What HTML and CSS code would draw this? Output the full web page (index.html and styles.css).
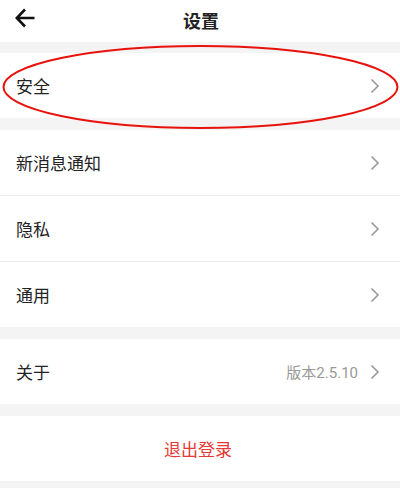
FILE: index.html
```html
<!DOCTYPE html>
<html lang="zh-CN">
<head>
<meta charset="utf-8">
<title>设置</title>
<link rel="stylesheet" href="styles.css">
</head>
<body>
<div class="page">
  <header class="topbar">
    <svg class="back" width="20" height="20" viewBox="0 0 20 20"><path d="M19.5 10H1.8M10 1.5L1.8 10L10 18.5" fill="none" stroke="#111" stroke-width="2.6" stroke-linecap="butt" stroke-linejoin="miter"/></svg>
    <h1 class="title">设置</h1>
  </header>

  <section class="group group--first">
    <div class="row"><span class="label">安全</span><span class="right"><svg class="chev" width="10" height="16" viewBox="0 0 10 16"><path d="M1.5 1.5L8 8L1.5 14.5" fill="none" stroke="#999" stroke-width="1.6"/></svg></span></div>
  </section>

  <section class="group">
    <div class="row"><span class="label">新消息通知</span><span class="right"><svg class="chev" width="10" height="16" viewBox="0 0 10 16"><path d="M1.5 1.5L8 8L1.5 14.5" fill="none" stroke="#999" stroke-width="1.6"/></svg></span></div>
    <div class="row"><span class="label">隐私</span><span class="right"><svg class="chev" width="10" height="16" viewBox="0 0 10 16"><path d="M1.5 1.5L8 8L1.5 14.5" fill="none" stroke="#999" stroke-width="1.6"/></svg></span></div>
    <div class="row"><span class="label">通用</span><span class="right"><svg class="chev" width="10" height="16" viewBox="0 0 10 16"><path d="M1.5 1.5L8 8L1.5 14.5" fill="none" stroke="#999" stroke-width="1.6"/></svg></span></div>
  </section>

  <section class="group">
    <div class="row"><span class="label">关于</span><span class="right"><span class="version">版本2.5.10</span><svg class="chev" width="10" height="16" viewBox="0 0 10 16"><path d="M1.5 1.5L8 8L1.5 14.5" fill="none" stroke="#999" stroke-width="1.6"/></svg></span></div>
  </section>

  <section class="group">
    <div class="row row--center"><span class="logout">退出登录</span></div>
  </section>

  <svg class="annot" width="400" height="90" viewBox="0 0 400 90"><ellipse cx="200.5" cy="42" rx="197" ry="41" fill="none" stroke="#e8120c" stroke-width="2"/></svg>
</div>
</body>
</html>
```

FILE: styles.css
```css
html, body {
  margin: 0;
  padding: 0;
}
body {
  background: #f4f4f4;
  font-family: "Noto Sans CJK SC", "Noto Sans", sans-serif;
  color: #222;
  width: 400px;
  height: 488px;
  overflow: hidden;
}
.page {
  position: relative;
  display: flex;
  flex-direction: column;
}
.topbar {
  height: 42px;
  background: #fff;
  display: flex;
  align-items: center;
  justify-content: center;
  position: relative;
}
.back {
  position: absolute;
  left: 15px;
  top: 8px;
}
.title {
  margin: 0;
  font-size: 18px;
  font-weight: 700;
  color: #222;
  line-height: 1;
  padding-left: 2px;
  margin-top: -3px;
}
.group {
  background: #fff;
  margin-top: 12px;
  display: flex;
  flex-direction: column;
}
.group--first {
  margin-top: 11px;
}
.row {
  height: 65px;
  display: flex;
  align-items: center;
  justify-content: space-between;
  padding: 0 20px 0 16px;
  box-sizing: border-box;
}
.row + .row {
  border-top: 1px solid #ececec;
  height: 66px;
}
.label {
  font-size: 17px;
  color: #222;
}
.right {
  display: flex;
  align-items: center;
  gap: 12px;
}
.version {
  font-family: "Roboto", "Noto Sans CJK SC", sans-serif;
  font-size: 15px;
  color: #999;
}
.chev {
  display: block;
}
.row--center {
  justify-content: center;
}
.logout {
  font-size: 17px;
  color: #e53935;
}
.annot {
  position: absolute;
  left: 0;
  top: 45px;
}
```
